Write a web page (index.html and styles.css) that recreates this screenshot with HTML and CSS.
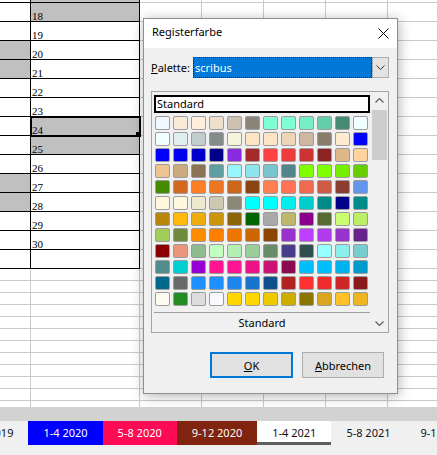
FILE: index.html
```html
<!DOCTYPE html>
<html lang="de">
<head>
<meta charset="utf-8">
<title>Registerfarbe</title>
<link rel="stylesheet" href="styles.css">
</head>
<body>
<div class="app">
  <div class="sheet">
    <table class="grid">
      <colgroup><col class="c-a"><col class="c-b"><col class="c-n"><col class="c-n"><col class="c-n"><col class="c-n"><col class="c-n"></colgroup>
      <tbody>
        <tr class="r-part"><td class="bd"></td><td class="bd sh"></td><td></td><td></td><td></td><td></td><td></td></tr>
        <tr class="r"><td class="bd"></td><td class="bd sh">18</td><td></td><td></td><td></td><td></td><td></td></tr>
        <tr class="r"><td class="bd"></td><td class="bd">19</td><td></td><td></td><td></td><td></td><td></td></tr>
        <tr class="r"><td class="bd sh"></td><td class="bd">20</td><td></td><td></td><td></td><td></td><td></td></tr>
        <tr class="r"><td class="bd sh"></td><td class="bd">21</td><td></td><td></td><td></td><td></td><td></td></tr>
        <tr class="r"><td class="bd"></td><td class="bd">22</td><td></td><td></td><td></td><td></td><td></td></tr>
        <tr class="r"><td class="bd"></td><td class="bd">23</td><td></td><td></td><td></td><td></td><td></td></tr>
        <tr class="r"><td class="bd"></td><td class="bd sh sel">24</td><td></td><td></td><td></td><td></td><td></td></tr>
        <tr class="r"><td class="bd"></td><td class="bd sh">25</td><td></td><td></td><td></td><td></td><td></td></tr>
        <tr class="r"><td class="bd"></td><td class="bd">26</td><td></td><td></td><td></td><td></td><td></td></tr>
        <tr class="r"><td class="bd sh"></td><td class="bd">27</td><td></td><td></td><td></td><td></td><td></td></tr>
        <tr class="r"><td class="bd sh"></td><td class="bd">28</td><td></td><td></td><td></td><td></td><td></td></tr>
        <tr class="r"><td class="bd"></td><td class="bd">29</td><td></td><td></td><td></td><td></td><td></td></tr>
        <tr class="r"><td class="bd"></td><td class="bd">30</td><td></td><td></td><td></td><td></td><td></td></tr>
        <tr class="r"><td class="bd"></td><td class="bd"></td><td></td><td></td><td></td><td></td><td></td></tr>
        <tr class="r-sm"><td></td><td></td><td></td><td></td><td></td><td></td><td></td></tr>
        <tr class="r-sm"><td></td><td></td><td></td><td></td><td></td><td></td><td></td></tr>
        <tr class="r-sm"><td></td><td></td><td></td><td></td><td></td><td></td><td></td></tr>
        <tr class="r-sm"><td></td><td></td><td></td><td></td><td></td><td></td><td></td></tr>
        <tr class="r-sm"><td></td><td></td><td></td><td></td><td></td><td></td><td></td></tr>
        <tr class="r-sm"><td></td><td></td><td></td><td></td><td></td><td></td><td></td></tr>
        <tr class="r-sm"><td></td><td></td><td></td><td></td><td></td><td></td><td></td></tr>
        <tr class="r-sm"><td></td><td></td><td></td><td></td><td></td><td></td><td></td></tr>
        <tr class="r-sm"><td></td><td></td><td></td><td></td><td></td><td></td><td></td></tr>
        <tr class="r-sm"><td></td><td></td><td></td><td></td><td></td><td></td><td></td></tr>
        <tr class="r-sm"><td></td><td></td><td></td><td></td><td></td><td></td><td></td></tr>
        <tr class="r-sm"><td></td><td></td><td></td><td></td><td></td><td></td><td></td></tr>
      </tbody>
    </table>
  </div>
  <div class="hband"></div>
  <div class="tabs">
    <div class="tab first">9-12 2019</div>
    <div class="tab t-blue">1-4 2020</div>
    <div class="tab t-pink">5-8 2020</div>
    <div class="tab t-brown">9-12 2020</div>
    <div class="tab active">1-4 2021</div>
    <div class="tab">5-8 2021</div>
    <div class="tab">9-12 2021</div>
  </div>
  <div class="tabs-foot"></div>

  <div class="dialog">
    <div class="titlebar">
      <span class="title">Registerfarbe</span>
      <span class="close"><svg width="11" height="11" viewBox="0 0 11 11"><path d="M0.5 0.5 L10.5 10.5 M10.5 0.5 L0.5 10.5" stroke="#000" stroke-width="1" fill="none"/></svg></span>
    </div>
    <div class="dbody">
      <div class="prow">
        <span class="plabel"><u>P</u>alette:</span>
        <div class="combo">
          <div class="combo-field">scribus</div>
          <div class="combo-btn"><svg width="9" height="5" viewBox="0 0 9 5"><path d="M0.5 0.5 L4.5 4.5 L8.5 0.5" stroke="#333" stroke-width="1" fill="none"/></svg></div>
        </div>
      </div>
      <div class="palbox">
        <div class="palmain">
          <div class="stdinput">Standard</div>
          <div class="swatches">
            <span class="sw" style="background:#F0F8FF"></span><span class="sw" style="background:#FAEBD7"></span><span class="sw" style="background:#FFEFDB"></span><span class="sw" style="background:#EEDFCC"></span><span class="sw" style="background:#CDC0B0"></span><span class="sw" style="background:#8B8378"></span><span class="sw" style="background:#7FFFD4"></span><span class="sw" style="background:#7FFFD4"></span><span class="sw" style="background:#76EEC6"></span><span class="sw" style="background:#66CDAA"></span><span class="sw" style="background:#458B74"></span><span class="sw" style="background:#F0FFFF"></span>
            <span class="sw" style="background:#F0FFFF"></span><span class="sw" style="background:#E0EEEE"></span><span class="sw" style="background:#C1CDCD"></span><span class="sw" style="background:#838B8B"></span><span class="sw" style="background:#F5F5DC"></span><span class="sw" style="background:#FFE4C4"></span><span class="sw" style="background:#FFE4C4"></span><span class="sw" style="background:#EED5B7"></span><span class="sw" style="background:#CDB79E"></span><span class="sw" style="background:#8B7D6B"></span><span class="sw" style="background:#FFEBCD"></span><span class="sw" style="background:#0000FF"></span>
            <span class="sw" style="background:#0000FF"></span><span class="sw" style="background:#0000EE"></span><span class="sw" style="background:#0000CD"></span><span class="sw" style="background:#00008B"></span><span class="sw" style="background:#8A2BE2"></span><span class="sw" style="background:#A52A2A"></span><span class="sw" style="background:#FF4040"></span><span class="sw" style="background:#EE3B3B"></span><span class="sw" style="background:#CD3333"></span><span class="sw" style="background:#8B2323"></span><span class="sw" style="background:#DEB887"></span><span class="sw" style="background:#FFD39B"></span>
            <span class="sw" style="background:#EEC591"></span><span class="sw" style="background:#CDAA7D"></span><span class="sw" style="background:#8B7355"></span><span class="sw" style="background:#5F9EA0"></span><span class="sw" style="background:#98F5FF"></span><span class="sw" style="background:#8EE5EE"></span><span class="sw" style="background:#7AC5CD"></span><span class="sw" style="background:#53868B"></span><span class="sw" style="background:#7FFF00"></span><span class="sw" style="background:#7FFF00"></span><span class="sw" style="background:#76EE00"></span><span class="sw" style="background:#66CD00"></span>
            <span class="sw" style="background:#458B00"></span><span class="sw" style="background:#D2691E"></span><span class="sw" style="background:#FF7F24"></span><span class="sw" style="background:#EE7621"></span><span class="sw" style="background:#CD661D"></span><span class="sw" style="background:#8B4513"></span><span class="sw" style="background:#FF7F50"></span><span class="sw" style="background:#FF7256"></span><span class="sw" style="background:#EE6A50"></span><span class="sw" style="background:#CD5B45"></span><span class="sw" style="background:#8B3E2F"></span><span class="sw" style="background:#6495ED"></span>
            <span class="sw" style="background:#FFF8DC"></span><span class="sw" style="background:#FFF8DC"></span><span class="sw" style="background:#EEE8CD"></span><span class="sw" style="background:#CDC8B1"></span><span class="sw" style="background:#8B8878"></span><span class="sw" style="background:#00FFFF"></span><span class="sw" style="background:#00FFFF"></span><span class="sw" style="background:#00EEEE"></span><span class="sw" style="background:#00CDCD"></span><span class="sw" style="background:#008B8B"></span><span class="sw" style="background:#00008B"></span><span class="sw" style="background:#008B8B"></span>
            <span class="sw" style="background:#B8860B"></span><span class="sw" style="background:#FFB90F"></span><span class="sw" style="background:#EEAD0E"></span><span class="sw" style="background:#CD950C"></span><span class="sw" style="background:#8B6508"></span><span class="sw" style="background:#006400"></span><span class="sw" style="background:#A9A9A9"></span><span class="sw" style="background:#BDB76B"></span><span class="sw" style="background:#8B008B"></span><span class="sw" style="background:#556B2F"></span><span class="sw" style="background:#CAFF70"></span><span class="sw" style="background:#BCEE68"></span>
            <span class="sw" style="background:#A2CD5A"></span><span class="sw" style="background:#6E8B3D"></span><span class="sw" style="background:#FF8C00"></span><span class="sw" style="background:#FF7F00"></span><span class="sw" style="background:#EE7600"></span><span class="sw" style="background:#CD6600"></span><span class="sw" style="background:#8B4500"></span><span class="sw" style="background:#9932CC"></span><span class="sw" style="background:#BF3EFF"></span><span class="sw" style="background:#B23AEE"></span><span class="sw" style="background:#9A32CD"></span><span class="sw" style="background:#68228B"></span>
            <span class="sw" style="background:#8B0000"></span><span class="sw" style="background:#E9967A"></span><span class="sw" style="background:#8FBC8F"></span><span class="sw" style="background:#C1FFC1"></span><span class="sw" style="background:#B4EEB4"></span><span class="sw" style="background:#9BCD9B"></span><span class="sw" style="background:#698B69"></span><span class="sw" style="background:#483D8B"></span><span class="sw" style="background:#2F4F4F"></span><span class="sw" style="background:#97FFFF"></span><span class="sw" style="background:#8DEEEE"></span><span class="sw" style="background:#79CDCD"></span>
            <span class="sw" style="background:#528B8B"></span><span class="sw" style="background:#00CED1"></span><span class="sw" style="background:#9400D3"></span><span class="sw" style="background:#FF1493"></span><span class="sw" style="background:#FF1493"></span><span class="sw" style="background:#EE1289"></span><span class="sw" style="background:#CD1076"></span><span class="sw" style="background:#8B0A50"></span><span class="sw" style="background:#00BFFF"></span><span class="sw" style="background:#00BFFF"></span><span class="sw" style="background:#00B2EE"></span><span class="sw" style="background:#009ACD"></span>
            <span class="sw" style="background:#00688B"></span><span class="sw" style="background:#696969"></span><span class="sw" style="background:#1E90FF"></span><span class="sw" style="background:#1E90FF"></span><span class="sw" style="background:#1C86EE"></span><span class="sw" style="background:#1874CD"></span><span class="sw" style="background:#104E8B"></span><span class="sw" style="background:#B22222"></span><span class="sw" style="background:#FF3030"></span><span class="sw" style="background:#EE2C2C"></span><span class="sw" style="background:#CD2626"></span><span class="sw" style="background:#8B1A1A"></span>
            <span class="sw" style="background:#FFFAF0"></span><span class="sw" style="background:#228B22"></span><span class="sw" style="background:#DCDCDC"></span><span class="sw" style="background:#F8F8FF"></span><span class="sw" style="background:#FFD700"></span><span class="sw" style="background:#FFD700"></span><span class="sw" style="background:#EEC900"></span><span class="sw" style="background:#CDAD00"></span><span class="sw" style="background:#8B7500"></span><span class="sw" style="background:#DAA520"></span><span class="sw" style="background:#FFC125"></span><span class="sw" style="background:#EEB422"></span>
          </div>
          <div class="palsep"></div>
          <div class="palfoot">Standard</div>
        </div>
        <div class="vscroll">
          <div class="arrow"><svg width="9" height="5" viewBox="0 0 9 5"><path d="M0.5 4.5 L4.5 0.5 L8.5 4.5" stroke="#606060" stroke-width="1.2" fill="none"/></svg></div>
          <div class="thumb"></div>
          <div class="track"></div>
          <div class="arrow"><svg width="9" height="5" viewBox="0 0 9 5"><path d="M0.5 0.5 L4.5 4.5 L8.5 0.5" stroke="#606060" stroke-width="1.2" fill="none"/></svg></div>
        </div>
      </div>
      <div class="btnrow">
        <div class="btn default"><u>O</u>K</div>
        <div class="btn"><u>A</u>bbrechen</div>
      </div>
    </div>
  </div>
</div>
</body>
</html>
```

FILE: styles.css
```css
* { box-sizing: border-box; }
html, body { margin: 0; padding: 0; }
body {
  width: 437px;
  height: 455px;
  overflow: hidden;
  background: #fff;
  font-family: "Noto Sans", "DejaVu Sans", sans-serif;
  font-size: 11px;
  color: #000;
}
.app {
  position: relative;
  width: 437px;
  height: 455px;
  display: flex;
  flex-direction: column;
  overflow: hidden;
}

/* spreadsheet */
.sheet { height: 407px; flex: none; overflow: hidden; background: #fff; }
.grid {
  border-collapse: separate;
  border-spacing: 0;
  table-layout: fixed;
  width: 450px;
  font-family: "Liberation Serif", "Times New Roman", serif;
  font-size: 11px;
}
.c-a { width: 31px; }
.c-b { width: 109px; }
.c-n { width: 62px; }
.grid td {
  padding: 0 0 0 1px;
  border-right: 1px solid #cacaca;
  border-bottom: 1px solid #cacaca;
  vertical-align: bottom;
  line-height: 10px;
  white-space: nowrap;
}
.grid td.bd { border-color: #000; }
.grid td.sh { background: #c0c0c0; }
.r-part { height: 3px; }
.r { height: 19px; }
.r-sm { height: 12px; }
.grid td.sel {
  position: relative;
  outline: 2px solid #000;
  outline-offset: -1px;
}
.grid td.sel::after {
  content: "";
  position: absolute;
  right: -2px;
  bottom: -2px;
  width: 5px;
  height: 5px;
  background: #000;
}

/* sheet tabs */
.hband { height: 14px; flex: none; background: #d2d2d2; }
.tabs {
  height: 24px;
  flex: none;
  display: flex;
  background: #f0f0f0;
  white-space: nowrap;
}
.tab {
  flex: none;
  padding: 0 15px;
  line-height: 24px;
  color: #111;
}
.tab.first { margin-left: -52px; }
.t-blue { background: #0000ff; color: #fff; }
.t-pink { background: #ff0a55; color: #fff; }
.t-brown { background: #80230f; color: #fff; }
.tab.active { background: #fff; box-shadow: inset 0 -3px 0 #5e5e5e; }
.tabs-foot { flex: 1; background: #f0f0f0; }

/* dialog */
.dialog {
  position: absolute;
  left: 143px;
  top: 18px;
  width: 255px;
  height: 376px;
  background: #f0f0f0;
  border: 1px solid #8e8e8e;
  box-shadow: 1px 2px 12px rgba(0, 0, 0, 0.3);
  display: flex;
  flex-direction: column;
}
.titlebar {
  height: 29px;
  flex: none;
  background: #fff;
  display: flex;
  justify-content: space-between;
  align-items: stretch;
  padding-left: 8px;
}
.title { line-height: 26px; }
.close {
  width: 28px;
  display: flex;
  align-items: center;
  justify-content: center;
}
.dbody {
  flex: 1;
  display: flex;
  flex-direction: column;
  padding: 9px 8px 14px 7px;
}
.prow { display: flex; height: 21px; align-items: center; }
.plabel { width: 42px; flex: none; line-height: 21px; }
.combo { flex: 1; display: flex; height: 21px; }
.combo-field {
  flex: 1;
  background: #0078d7;
  color: #fff;
  border: 1px dotted #222;
  padding-left: 1px;
  line-height: 19px;
}
.combo-btn {
  width: 17px;
  flex: none;
  background: #e3e3e3;
  border: 1px solid #adadad;
  display: flex;
  align-items: center;
  justify-content: center;
}

.palbox {
  margin-top: 13px;
  height: 242px;
  flex: none;
  border: 1px solid #a3a3a3;
  display: flex;
}
.palmain {
  width: 219px;
  flex: none;
  padding: 3px 1px 0 2px;
  display: flex;
  flex-direction: column;
}
.stdinput {
  height: 18px;
  background: #fff;
  border: 1px solid #000;
  box-shadow: inset 0 0 0 1px #000;
  padding-left: 2px;
  line-height: 16px;
}
.swatches {
  margin: 3px 0 0 1px;
  display: grid;
  grid-template-columns: repeat(12, 15px);
  grid-auto-rows: 14px;
  column-gap: 3px;
  row-gap: 2px;
}
.sw {
  display: block;
  border: 1px solid #9c9c9c;
  border-radius: 2px;
}
.palsep { margin-top: 6px; height: 1px; background: #a0a0a0; }
.palfoot { height: 19px; line-height: 19px; text-align: center; }
.vscroll {
  width: 17px;
  flex: none;
  display: flex;
  flex-direction: column;
  background: #f0f0f0;
}
.arrow {
  height: 17px;
  flex: none;
  display: flex;
  align-items: center;
  justify-content: center;
}
.thumb { height: 50px; margin: 1px 1px 0; background: #cdcdcd; flex: none; }
.track { flex: 1; }

.btnrow {
  margin-top: 19px;
  display: flex;
  justify-content: flex-end;
  gap: 9px;
  padding-right: 5px;
}
.btn {
  width: 82px;
  height: 26px;
  background: #e1e1e1;
  border: 1px solid #adadad;
  display: flex;
  align-items: center;
  justify-content: center;
}
.btn.default { width: 83px; border: 2px solid #0078d7; }
```
